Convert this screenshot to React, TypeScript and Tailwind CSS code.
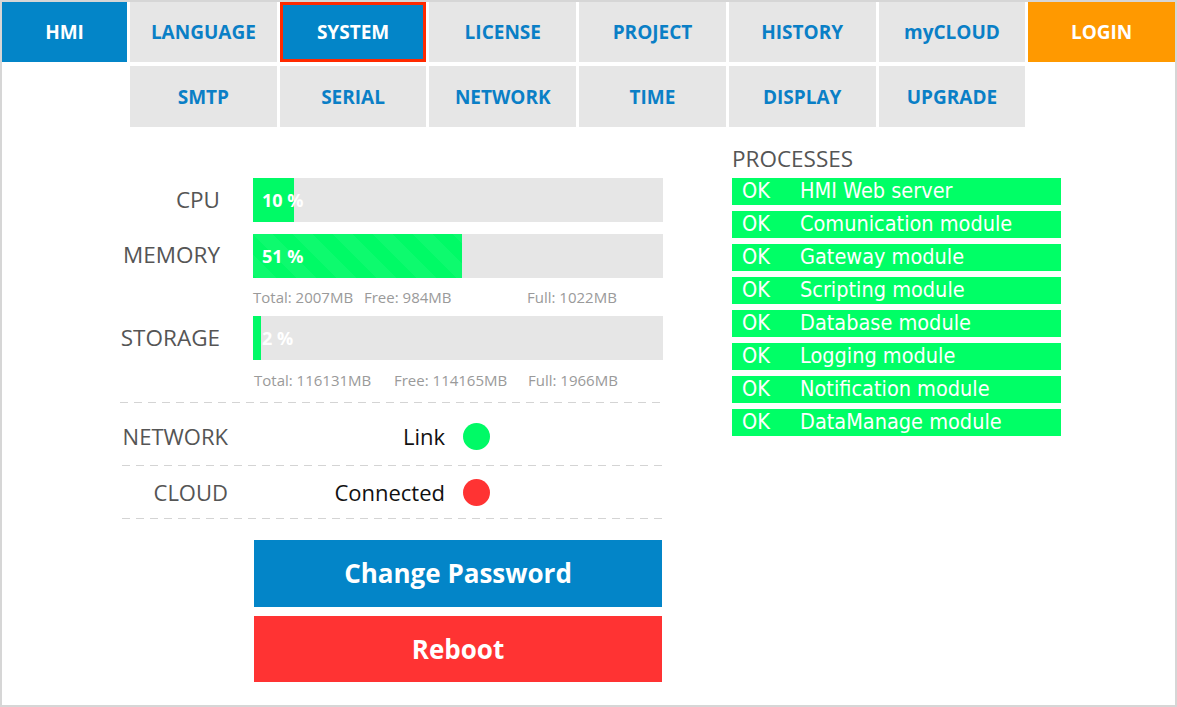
import React from "react";

const F = { fontFamily: '"Open Sans", "Noto Sans", sans-serif' };
const T = { fontFamily: '"DejaVu Sans Condensed", "DejaVu Sans", Tahoma, sans-serif' };

const row1 = ["LANGUAGE", "SYSTEM", "LICENSE", "PROJECT", "HISTORY", "myCLOUD"];
const row2 = ["SMTP", "SERIAL", "NETWORK", "TIME", "DISPLAY", "UPGRADE"];
const procs = [
  "HMI Web server",
  "Comunication module",
  "Gateway module",
  "Scripting module",
  "Database module",
  "Logging module",
  "Notification module",
  "DataManage module",
];

function Bar({ pct, striped }: { pct: number; striped?: boolean }) {
  return (
    <div className="relative w-[410px] h-[44px] bg-[#e6e6e6]">
      <div
        className={
          "h-full bg-[#00fa66] " +
          (striped
            ? "bg-[linear-gradient(45deg,rgba(255,255,255,0.05)_25%,transparent_25%,transparent_50%,rgba(255,255,255,0.05)_50%,rgba(255,255,255,0.05)_75%,transparent_75%,transparent)] bg-[length:40px_40px]"
            : "")
        }
        style={{ width: `${pct}%` }}
      />
      <span className="absolute left-[9px] top-0 h-full flex items-center text-white font-bold text-[18px]">
        {pct} %
      </span>
    </div>
  );
}

function Dash({ ml }: { ml: string }) {
  return (
    <div
      className={
        "h-px w-[540px] bg-[repeating-linear-gradient(to_right,#d4d4d4_0_8px,transparent_8px_14px)] " + ml
      }
    />
  );
}

export default function App() {
  return (
    <div
      className="w-[1177px] h-[707px] border-2 border-[#d6d6d6] bg-white box-border overflow-hidden"
      style={F}
    >
      <div className="grid grid-cols-[125px_repeat(7,1fr)] grid-rows-[60px_61px] gap-x-[3px] gap-y-[4px]">
        <div className="bg-[#0385c8] text-white font-bold text-[19px] flex items-center justify-center">
          HMI
        </div>
        {row1.map((t) =>
          t === "SYSTEM" ? (
            <div
              key={t}
              className="bg-[#0385c8] border-[3px] border-[#ff2a00] text-white font-bold text-[19px] flex items-center justify-center"
            >
              {t}
            </div>
          ) : (
            <div
              key={t}
              className="bg-[#e6e6e6] text-[#0a7fc6] font-bold text-[19px] flex items-center justify-center"
            >
              {t}
            </div>
          )
        )}
        <div className="bg-[#ff9900] text-white font-bold text-[19px] flex items-center justify-center">
          LOGIN
        </div>
        <div />
        {row2.map((t) => (
          <div
            key={t}
            className="bg-[#e6e6e6] text-[#0a7fc6] font-bold text-[19px] flex items-center justify-center pt-[1px]"
          >
            {t}
          </div>
        ))}
      </div>

      <div className="flex">
        <div className="w-[730px]">
          <div className="mt-[51px] grid grid-cols-[218px_410px] gap-x-[33px] items-center">
            <div className="text-right text-[22.5px] text-[#555]">CPU</div>
            <Bar pct={10} />
            <div className="h-[12px]" />
            <div />
            <div className="text-right text-[22.5px] text-[#555] pb-[3px]">MEMORY</div>
            <Bar pct={51} striped />
            <div />
            <div className="flex text-[15px] text-[#9a9a9a] h-[38px] items-center">
              <span className="w-[111px]">Total: 2007MB</span>
              <span className="w-[163px]">Free: 984MB</span>
              <span>Full: 1022MB</span>
            </div>
            <div className="text-right text-[22.5px] text-[#555]">STORAGE</div>
            <Bar pct={2} />
            <div />
            <div className="flex text-[15px] text-[#9a9a9a] h-[40px] items-center pl-[1px]">
              <span className="w-[140px]">Total: 116131MB</span>
              <span className="w-[134px]">Free: 114165MB</span>
              <span>Full: 1966MB</span>
            </div>
          </div>

          <div className="mt-[2px]">
            <Dash ml="ml-[118px]" />
            <div className="flex items-center h-[62px] ml-[112px] pt-[4px]">
              <div className="w-[114px] text-right text-[22px] text-[#555]">NETWORK</div>
              <div className="w-[217px] text-right text-[22px] text-[#111]">Link</div>
              <div className="ml-[18px] w-[27px] h-[27px] rounded-full bg-[#00fa66]" />
            </div>
            <Dash ml="ml-[120px]" />
            <div className="flex items-center h-[52px] ml-[112px]">
              <div className="w-[114px] text-right text-[22px] text-[#555]">CLOUD</div>
              <div className="w-[217px] text-right text-[22px] text-[#111]">Connected</div>
              <div className="ml-[18px] w-[27px] h-[27px] rounded-full bg-[#ff3333]" />
            </div>
            <Dash ml="ml-[120px]" />
          </div>

          <div className="ml-[252px] mt-[21px] flex flex-col gap-[9px] w-[408px]">
            <button className="h-[67px] bg-[#0385c8] text-white font-bold text-[26px]">
              Change Password
            </button>
            <button className="h-[66px] bg-[#ff3333] text-white font-bold text-[26px]">
              Reboot
            </button>
          </div>
        </div>

        <div className="mt-[16px]">
          <div className="text-[22.5px] text-[#555] h-[34px] leading-[32px]">PROCESSES</div>
          <div className="flex flex-col gap-[6px] mt-[1px]">
            {procs.map((p) => (
              <div
                key={p}
                className="w-[329px] h-[27px] bg-[#00ff66] text-white text-[21.5px] flex items-center"
                style={T}
              >
                <span className="w-[68px] pl-[10px]">OK</span>
                <span>{p}</span>
              </div>
            ))}
          </div>
        </div>
      </div>
    </div>
  );
}
